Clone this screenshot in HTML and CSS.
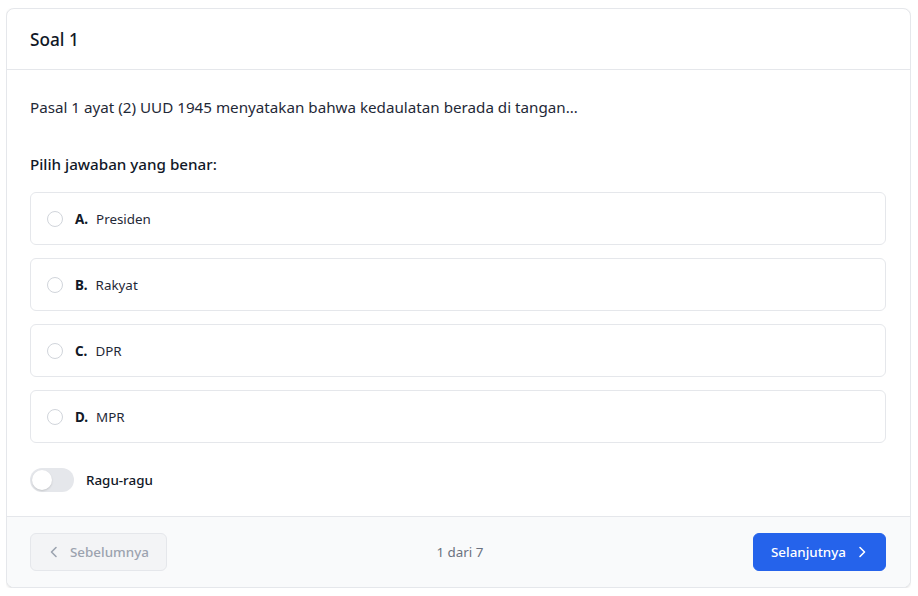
FILE: index.html
```html
<!DOCTYPE html>
<html lang="id">
<head>
<meta charset="utf-8">
<title>Soal 1</title>
<link rel="stylesheet" href="styles.css">
</head>
<body>
<div class="card">
  <div class="card-header">
    <h2 class="title">Soal 1</h2>
  </div>
  <div class="card-body">
    <p class="question">Pasal 1 ayat (2) UUD 1945 menyatakan bahwa kedaulatan berada di tangan…</p>
    <p class="prompt">Pilih jawaban yang benar:</p>
    <div class="options">
      <label class="option"><span class="radio"></span><span class="letter">A.</span><span class="text">Presiden</span></label>
      <label class="option"><span class="radio"></span><span class="letter">B.</span><span class="text">Rakyat</span></label>
      <label class="option"><span class="radio"></span><span class="letter">C.</span><span class="text">DPR</span></label>
      <label class="option"><span class="radio"></span><span class="letter">D.</span><span class="text">MPR</span></label>
    </div>
    <div class="doubt">
      <span class="switch"><span class="knob"></span></span>
      <span class="doubt-label">Ragu-ragu</span>
    </div>
  </div>
  <div class="card-footer">
    <button class="btn btn-prev" disabled>
      <svg class="chev" viewBox="0 0 16 16" width="16" height="16"><path d="M10 3.5 5.5 8l4.5 4.5" fill="none" stroke="currentColor" stroke-width="1.6" stroke-linecap="round" stroke-linejoin="round"/></svg>
      Sebelumnya
    </button>
    <span class="counter">1 dari 7</span>
    <button class="btn btn-next">
      Selanjutnya
      <svg class="chev" viewBox="0 0 16 16" width="16" height="16"><path d="M6 3.5 10.5 8 6 12.5" fill="none" stroke="currentColor" stroke-width="1.6" stroke-linecap="round" stroke-linejoin="round"/></svg>
    </button>
  </div>
</div>
</body>
</html>
```

FILE: styles.css
```css
* { box-sizing: border-box; }
body {
  margin: 8px 7px 0 6px;
  background: #ffffff;
  font-family: "Noto Sans", "Open Sans", sans-serif;
  color: #1f2937;
}
.card {
  border: 1px solid #e5e7eb;
  border-radius: 8px;
  background: #fff;
  box-shadow: 0 1px 3px rgba(0,0,0,0.08), 0 1px 2px rgba(0,0,0,0.04);
  overflow: hidden;
}
.card-header {
  height: 61px;
  padding: 0 23px;
  display: flex;
  align-items: center;
  border-bottom: 1px solid #e5e7eb;
}
.title {
  margin: 0;
  font-size: 17.2px;
  font-weight: 500;
  color: #111827;
}
.card-body {
  padding: 24px 24px 24px 23px;
}
.question {
  margin: 0 0 32px;
  font-size: 15.2px;
  line-height: 26px;
  color: #1f2937;
}
.prompt {
  margin: 0 0 16px;
  font-size: 15.2px;
  font-weight: 500;
  line-height: 24px;
  color: #111827;
}
.options {
  display: flex;
  flex-direction: column;
  gap: 13px;
}
.option {
  display: flex;
  align-items: center;
  height: 53px;
  padding: 0 16px;
  border: 1px solid #e5e7eb;
  border-radius: 6px;
  font-size: 13.4px;
  color: #1f2937;
}
.radio {
  width: 16px;
  height: 16px;
  border: 1px solid #d1d5db;
  border-radius: 50%;
  background: #fff;
  margin-right: 12px;
  flex: none;
}
.letter {
  font-weight: 700;
  color: #111827;
  margin-right: 8px;
}
.doubt {
  display: flex;
  align-items: center;
  margin-top: 25px;
}
.switch {
  width: 44px;
  height: 24px;
  border-radius: 12px;
  background: #e5e7eb;
  padding: 2px;
  display: flex;
  align-items: center;
}
.knob {
  width: 20px;
  height: 20px;
  border-radius: 50%;
  background: #fff;
  box-shadow: 0 1px 2px rgba(0,0,0,0.15);
}
.doubt-label {
  margin-left: 12px;
  font-size: 13.4px;
  font-weight: 500;
  color: #111827;
}
.card-footer {
  background: #f9fafb;
  border-top: 1px solid #e5e7eb;
  padding: 16px 24px 16px 23px;
  display: flex;
  align-items: center;
  justify-content: space-between;
}
.btn {
  height: 38px;
  display: inline-flex;
  align-items: center;
  gap: 8px;
  font-family: inherit;
  font-size: 13.4px;
  font-weight: 500;
  border-radius: 6px;
}
.btn-prev {
  padding: 0 17px 0 15px;
  background: #f3f4f6;
  border: 1px solid #e5e7eb;
  color: #9ca3af;
}
.btn-next {
  padding: 0 15px 0 17px;
  background: #2563eb;
  border: 1px solid #2563eb;
  color: #fff;
}
.counter {
  font-size: 13.4px;
  color: #6b7280;
}
```
